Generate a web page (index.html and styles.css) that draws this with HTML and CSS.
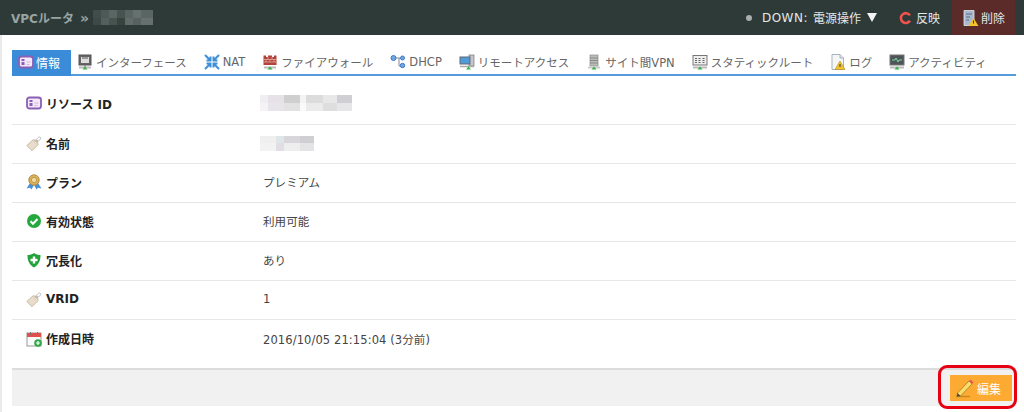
FILE: index.html
```html
<!DOCTYPE html>
<html lang="ja">
<head>
<meta charset="utf-8">
<title>VPCルータ</title>
<link rel="stylesheet" href="styles.css">
</head>
<body>
<svg class="defs" width="0" height="0">
  <defs>
    <symbol id="i-info" viewBox="0 0 16 16"><rect x="1" y="2.500" width="14" height="11" rx="2.500" fill="#f3e9f8" stroke="#8a5fb5" stroke-width="1.800"/><rect x="3.500" y="5" width="3" height="2" fill="#8a5fb5"/><rect x="3.500" y="8" width="3" height="3" fill="#8a5fb5"/><path d="M8.500 8h4M8.500 10.500h3" stroke="#cdb7e0"/></symbol>
    <symbol id="i-tag" viewBox="0 0 16 16"><path d="M.8 10.500 7 4.800l4.500.7.500 4.200-6 6z" fill="#e9dccb" stroke="#c4b6a2" stroke-width=".9"/><circle cx="9.500" cy="7.300" r=".9" fill="#fff" stroke="#b9ab98" stroke-width=".5"/><path d="M9.500 7c1-4 4-6 5-4.500S13 6 10.500 6.500" fill="none" stroke="#a9a9a9" stroke-width=".8"/></symbol>
    <symbol id="i-plan" viewBox="0 0 16 16"><path d="M4 9 .5 14.500l3.500-.7 1.500 1.700L8 11l2.500 4.500 1.500-1.700 3.500.7L12 9z" fill="#4a90d9"/><circle cx="8" cy="6" r="5.200" fill="#d8b25a" stroke="#b98d3a"/><circle cx="8" cy="6" r="2.600" fill="#efdca6" stroke="#c29a48"/></symbol>
    <symbol id="i-ok" viewBox="0 0 16 16"><circle cx="8" cy="8" r="7" fill="#25a83d"/><path d="m4.500 8.200 2.500 2.500 4.500-4.700" fill="none" stroke="#fff" stroke-width="2"/></symbol>
    <symbol id="i-shield" viewBox="0 0 16 16"><path d="M8 1c2 1.500 4 2 6.500 2 0 6-2 10-6.500 12.500C3.500 13 1.500 9 1.500 3 4 3 6 2.500 8 1z" fill="#22a23a"/><path d="M8 4.500v7M4.500 8h7" stroke="#fff" stroke-width="2.400"/></symbol>
    <symbol id="i-cal" viewBox="0 0 16 16"><rect x="1" y="2" width="14" height="13" fill="#fbfbfb" stroke="#999"/><rect x="1" y="2" width="14" height="4" fill="#e2504c"/><path d="M4.500 1v3M11.500 1v3" stroke="#777"/><circle cx="12" cy="12" r="3.800" fill="#30a84a"/><path d="M10 12h4M12 10v4" stroke="#fff" stroke-width="1.200"/></symbol>
    <symbol id="i-port" viewBox="0 0 16 16"><rect x="2" y="1" width="12" height="10" fill="#666" stroke="#555"/><rect x="4" y="3" width="8" height="6" fill="#ddd"/><path d="M6 3v2M8 3v2M10 3v2" stroke="#555"/><path d="M2 13.500h12" stroke="#bbb" stroke-width="2"/><path d="M8 11v2" stroke="#777"/><path d="m5.500 15.500 2.500-3 2.500 3z" fill="#36b24a"/></symbol>
    <symbol id="i-nat" viewBox="0 0 16 16"><g fill="none" stroke="#3f8fd8" stroke-width="2"><path d="M1 1l5 5M6.500 2.500v4h-4M15 1l-5 5M9.500 2.500v4h4M1 15l5-5M6.500 13.500v-4h-4M15 15l-5-5M9.500 13.500v-4h4"/></g></symbol>
    <symbol id="i-fw" viewBox="0 0 16 16"><path d="M1.500 1.500h2.500V3h2V1.500h4V3h2V1.500h2.500V11h-13z" fill="#b4413c"/><path d="M1.500 5.500h13M1.500 8h13M6 3v2.500M10 3v2.500M4 5.500V8M8 5.500V8M12 5.500V8" stroke="#e6b9a8" stroke-width=".7"/><path d="M2 13.500h12" stroke="#bbb" stroke-width="2"/><path d="m5.500 15.500 2.500-3 2.500 3z" fill="#36b24a"/></symbol>
    <symbol id="i-dhcp" viewBox="0 0 16 16"><path d="M4 4h5v8h3M9 4h3" fill="none" stroke="#888"/><circle cx="3.500" cy="4" r="2.500" fill="#6fa6e6" stroke="#3f78c8"/><circle cx="12.500" cy="4" r="2" fill="#6fa6e6" stroke="#3f78c8"/><circle cx="12.500" cy="11.500" r="2.200" fill="#6fa6e6" stroke="#3f78c8"/></symbol>
    <symbol id="i-remote" viewBox="0 0 16 16"><rect x="10" y="1" width="5" height="11" fill="#c4c8cc" stroke="#777" stroke-width=".7"/><rect x="1" y="3" width="10" height="7" fill="#4d9bd8" stroke="#667"/><path d="M1 12.500h14" stroke="#aaa" stroke-width="1.500"/><path d="m7 15.500 2.500-3 2.500 3z" fill="#36b24a"/></symbol>
    <symbol id="i-vpn" viewBox="0 0 16 16"><rect x="4" y="1" width="8" height="11" fill="#b8bdb8" stroke="#8a8f8a" stroke-width=".7"/><path d="M4 4h8M4 6.500h8M4 9h8" stroke="#777" stroke-width=".7"/><path d="M2 13.500h12" stroke="#ccc" stroke-width="2"/><path d="m5.500 15.500 2.500-3 2.500 3z" fill="#36b24a"/></symbol>
    <symbol id="i-route" viewBox="0 0 16 16"><rect x="1" y="1.500" width="14" height="9.500" fill="#eee" stroke="#777"/><path d="M3 4.500h2M3 6.500h2M3 8.500h2M6.500 4.500h2M6.500 6.500h2M6.500 8.500h2M10.500 4.500h2M10.500 6.500h2M10.500 8.500h2" stroke="#666"/><path d="M1 13.500h14" stroke="#bbb" stroke-width="2"/><path d="m5.500 15.500 2.500-3 2.500 3z" fill="#36b24a"/></symbol>
    <symbol id="i-log" viewBox="0 0 16 16"><path d="M2 .5h8l3.500 3.500v11.500H2z" fill="#f4f6f8" stroke="#a9b2ba"/><path d="M10 .5V4h3.500" fill="#dde" stroke="#a9b2ba"/><path d="m10 7 5 8.500H5z" fill="#f3c32c" stroke="#b98d1a" stroke-width=".6"/><path d="M10 10v3" stroke="#333"/></symbol>
    <symbol id="i-act" viewBox="0 0 16 16"><rect x="1" y="1" width="14" height="10" fill="#4d5559" stroke="#777"/><path d="M3 6h3l1-2 2 4 1-2h3" fill="none" stroke="#7fd6a0"/><path d="M1 13.500h14" stroke="#bbb" stroke-width="2"/><path d="m5.500 15.500 2.500-3 2.500 3z" fill="#36b24a"/></symbol>
    <symbol id="i-del" viewBox="0 0 16 16"><path d="M1 .5h10v15H1z" fill="#aab8cc" stroke="#e3e8ee" stroke-width=".8"/><path d="M3 4h6M3 7h4M3 10h3" stroke="#5a6c88"/><path d="m10.500 8 5 8h-10z" fill="#f3c32c"/><path d="M10.500 10.500v3" stroke="#333"/></symbol>
    <symbol id="i-pencil" viewBox="0 0 20 20"><path d="M1 18.500h14" stroke="#c98822" stroke-width="1.500"/><path d="M2.500 15 14 3l3 3L5.500 18 2 18.500z" fill="#f9dc6a" stroke="#9a7420" stroke-width=".7"/><path d="M14 3l1.500-1.500 3 3L17 6z" fill="#e8574f"/><path d="M2 18.500l.5-3.500 3 3z" fill="#444"/></symbol>
    <symbol id="i-reload" viewBox="0 0 14 14"><path d="M11.800 4.200A5.300 5.300 0 1 0 11.800 10" fill="none" stroke="#f0524e" stroke-width="2.800"/></symbol>
  </defs>
</svg>

<header class="topbar">
  <div class="crumb">
    <span>VPCルータ <span class="sep">»</span></span>
    <span class="mosaic mosaic-dark"><i></i><i></i></span>
  </div>
  <div class="actions">
    <span class="dot"></span>
    <span class="power"><span class="state">DOWN:</span>電源操作<b class="caret"></b></span>
    <span class="reflect"><svg class="ico14"><use href="#i-reload"/></svg>反映</span>
    <span class="delete"><svg class="ico16"><use href="#i-del"/></svg>削除</span>
  </div>
</header>

<main class="panel">
  <nav class="tabs">
    <a class="tab active"><svg class="ico16"><use href="#i-info"/></svg>情報</a>
    <a class="tab"><svg class="ico16"><use href="#i-port"/></svg>インターフェース</a>
    <a class="tab"><svg class="ico16"><use href="#i-nat"/></svg>NAT</a>
    <a class="tab"><svg class="ico16"><use href="#i-fw"/></svg>ファイアウォール</a>
    <a class="tab"><svg class="ico16"><use href="#i-dhcp"/></svg>DHCP</a>
    <a class="tab"><svg class="ico16"><use href="#i-remote"/></svg>リモートアクセス</a>
    <a class="tab"><svg class="ico16"><use href="#i-vpn"/></svg>サイト間VPN</a>
    <a class="tab"><svg class="ico16"><use href="#i-route"/></svg>スタティックルート</a>
    <a class="tab"><svg class="ico16"><use href="#i-log"/></svg>ログ</a>
    <a class="tab"><svg class="ico16"><use href="#i-act"/></svg>アクティビティ</a>
  </nav>

  <section class="rows">
    <div class="row first"><div class="key"><svg class="ico16"><use href="#i-info"/></svg>リソース ID</div><div class="val"><span class="mosaic mosaic-id"><i></i><i></i></span></div></div>
    <div class="row"><div class="key"><svg class="ico16"><use href="#i-tag"/></svg>名前</div><div class="val"><span class="mosaic mosaic-name"><i></i><i></i></span></div></div>
    <div class="row"><div class="key"><svg class="ico16"><use href="#i-plan"/></svg>プラン</div><div class="val">プレミアム</div></div>
    <div class="row"><div class="key"><svg class="ico16"><use href="#i-ok"/></svg>有効状態</div><div class="val">利用可能</div></div>
    <div class="row"><div class="key"><svg class="ico16"><use href="#i-shield"/></svg>冗長化</div><div class="val">あり</div></div>
    <div class="row"><div class="key"><svg class="ico16"><use href="#i-tag"/></svg>VRID</div><div class="val">1</div></div>
    <div class="row last"><div class="key"><svg class="ico16"><use href="#i-cal"/></svg>作成日時</div><div class="val">2016/10/05 21:15:04 (3分前)</div></div>
  </section>

  <footer class="foot">
    <button class="edit"><svg class="ico20"><use href="#i-pencil"/></svg>編集</button>
    <span class="callout"></span>
  </footer>
</main>
</body>
</html>
```
FILE: styles.css
```css
* { box-sizing: border-box; }
html, body { margin: 0; padding: 0; height: 100%; overflow: hidden; background: #fff; }
body { font-family: "DejaVu Sans", "Noto Sans CJK JP", sans-serif; font-size: 11px; color: #444; }
.defs { position: absolute; }
svg { display: block; flex: none; }
.ico14 { width: 13px; height: 14px; }
.ico16 { width: 16px; height: 16px; }
.ico20 { width: 20px; height: 20px; }

.topbar { height: 35px; background: #2e3a38; display: flex; justify-content: space-between; padding-left: 11px; }
.crumb { display: flex; align-items: center; gap: 3px; color: #98a4a2; font-weight: bold; font-size: 12px; }
.sep { font-size: 14px; margin-left: 2px; }
.actions { display: flex; align-items: center; color: #e4e8e7; font-size: 12px; margin-right: 9px; }
.dot { width: 6px; height: 6px; border-radius: 50%; background: #a9adac; margin-right: 10px; }
.power { display: flex; align-items: center; white-space: pre; }
.state { letter-spacing: .5px; margin-right: 5px; }
.caret { width: 0; height: 0; margin-left: 6px; border-left: 5.500px solid transparent; border-right: 5.500px solid transparent; border-top: 9px solid #f2f4f4; }
.reflect { display: flex; align-items: center; gap: 4px; margin: 0 12px 0 22px; }
.delete { display: flex; align-items: center; gap: 2px; height: 35px; width: 63px; padding-left: 11px; background: #5a2b29; }

.mosaic { display: inline-flex; flex-direction: column; filter: blur(.7px); }
.mosaic i { display: block; flex: 1; }
.mosaic-dark { width: 60px; height: 15px; margin-left: 1px; }
.mosaic-dark i:nth-child(1) { background: linear-gradient(90deg, #414d4b 0 13%, #4d5957 13% 27%, #5b6664 27% 40%, #47534f 40% 53%, #586462 53% 67%, #66716f 67% 80%, #5a6664 80% 100%); }
.mosaic-dark i:nth-child(2) { background: linear-gradient(90deg, #3d4947 0 13%, #535f5d 13% 27%, #47534f 27% 40%, #37433f 40% 53%, #616c6a 53% 67%, #56625f 67% 80%, #66716f 80% 100%); }
.mosaic-id { width: 92px; height: 16px; margin-left: -3px; vertical-align: middle; }
.mosaic-id i:nth-child(1) { background: linear-gradient(90deg, #f0eef2 0 9%, #e6e2e8 9% 26%, #cfcfd0 26% 43%, #f4f4f4 43% 50%, #dcdcdc 50% 68%, #e8e8e8 68% 84%, #d0d0d4 84% 100%); }
.mosaic-id i:nth-child(2) { background: linear-gradient(90deg, #f5f3f5 0 9%, #e8e5ea 9% 26%, #e2e2e2 26% 43%, #fafafa 43% 50%, #ebebeb 50% 68%, #dedede 68% 84%, #e6e6e8 84% 100%); }
.mosaic-name { width: 54px; height: 15px; margin-left: -3px; vertical-align: middle; }
.mosaic-name i:nth-child(1) { background: linear-gradient(90deg, #efefef 0 30%, #dfe6e8 30% 45%, #d8d6da 45% 75%, #cfcfd1 75% 100%); }
.mosaic-name i:nth-child(2) { background: linear-gradient(90deg, #f2f2f2 0 30%, #e2dde4 30% 45%, #eeeeee 45% 75%, #e4e4e6 75% 100%); }

.panel { height: 377px; border-left: 2px solid #eaeaea; padding: 15px 8px 0 10px; }
.tabs { display: flex; height: 26px; border-bottom: 2px solid #569bdc; color: #666; font-size: 11.500px; }
.tab { display: flex; align-items: center; gap: 3px; padding: 0 8px 0 6px; margin-right: 3px; white-space: nowrap; }
.tab.active { background: #3a8bd8; color: #fff; gap: 2px; height: 26px; padding: 0 11px 2px 6px; margin-right: 0; font-size: 12px; }

.rows { margin-top: 10px; }
.row { display: flex; align-items: center; height: 39px; padding-bottom: 2px; border-bottom: 1px solid #e7e7e7; font-size: 12px; }
.row.first { padding-bottom: 4px; }
.row.last { height: 48px; border-bottom: 0; padding-bottom: 11px; }
.key { width: 251px; padding-left: 14px; display: flex; align-items: center; gap: 4px; font-weight: bold; color: #222; font-size: 12px; }
.val { color: #444; font-size: 11.500px; letter-spacing: .1px; }

.foot { position: relative; height: 38px; background: #f1f1f1; border-top: 2px solid #dcdcdc; display: flex; justify-content: flex-end; align-items: center; padding-right: 4px; }
.edit { display: flex; align-items: center; gap: 2px; width: 62px; height: 26px; border: 0; padding: 0 0 0 5px; background: #fdaa33; color: #fff; font: inherit; font-size: 12px; }
.callout { position: absolute; left: 926px; top: -5px; width: 79px; height: 44px; border: 3px solid #e60012; border-radius: 9px; pointer-events: none; }
```
